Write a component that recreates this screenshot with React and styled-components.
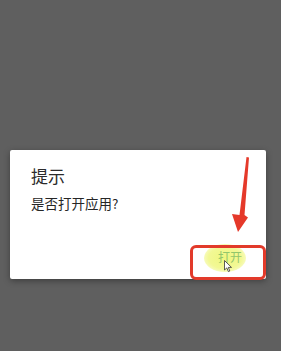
import React from "react";
import styled, { createGlobalStyle } from "styled-components";

const Global = createGlobalStyle`
  html, body { margin: 0; padding: 0; background: #5f5f5f; }
  body { font-family: "Noto Sans CJK SC", "Noto Sans", sans-serif; }
`;

const Screen = styled.div`
  width: 281px;
  height: 351px;
  background: #5f5f5f;
  display: flex;
  flex-direction: column;
  padding: 150px 0 0 10px;
  box-sizing: border-box;
  position: relative;
  overflow: hidden;
`;

const Dialog = styled.div`
  width: 256px;
  height: 129px;
  background: #ffffff;
  border-radius: 2px;
  box-shadow: 0 2px 6px rgba(0, 0, 0, 0.35);
  box-sizing: border-box;
  padding: 14px 21px 0 21px;
  display: flex;
  flex-direction: column;
  position: relative;
`;

const Title = styled.div`
  font-size: 17px;
  line-height: 24px;
  color: #2b2b2b;
`;

const Message = styled.div`
  margin-top: 5px;
  font-size: 13.5px;
  line-height: 20px;
  color: #262626;
`;

const Footer = styled.div`
  margin-top: auto;
  display: flex;
  justify-content: flex-end;
  padding: 0 3px 15px 0;
`;

const ActionButton = styled.div`
  position: relative;
  font-size: 12px;
  line-height: 14px;
  color: #92c66c;
`;

const Ripple = styled.div`
  position: absolute;
  left: -14px;
  top: -6px;
  width: 42px;
  height: 28px;
  border-radius: 50%;
  background: radial-gradient(ellipse at center, rgba(238, 246, 120, 0.95) 0%, rgba(240, 247, 130, 0.85) 55%, rgba(250, 252, 200, 0) 100%);
`;

const Label = styled.span`
  position: relative;
`;

const Cursor = styled.svg`
  position: absolute;
  left: 6px;
  top: 10px;
`;

const Highlight = styled.div`
  position: absolute;
  left: 180px;
  top: 95px;
  width: 76px;
  height: 35px;
  box-sizing: border-box;
  border: 3px solid #e23a2a;
  border-radius: 6px;
`;

const Arrow = styled.svg`
  position: absolute;
  left: 0;
  top: 0;
`;

export default function App() {
  return (
    <>
      <Global />
      <Screen>
        <Dialog>
          <Title>提示</Title>
          <Message>是否打开应用?</Message>
          <Footer>
            <ActionButton>
              <Ripple />
              <Label>打开</Label>
              <Cursor width="9" height="13" viewBox="0 0 9 13">
                <path d="M0.5 0.5 L0.5 10 L2.8 7.9 L4.4 11.6 L5.8 11 L4.3 7.4 L7.5 7.4 Z" fill="#ffffff" stroke="#333" strokeWidth="0.8" strokeLinejoin="round" />
              </Cursor>
            </ActionButton>
          </Footer>
          <Highlight />
        </Dialog>
        <Arrow width="281" height="351" viewBox="0 0 281 351">
          <polygon points="246.5,157 249,157.5 244.5,215 248,217.5 238,232 232,214 239.5,215" fill="#e5392a" />
        </Arrow>
      </Screen>
    </>
  );
}
